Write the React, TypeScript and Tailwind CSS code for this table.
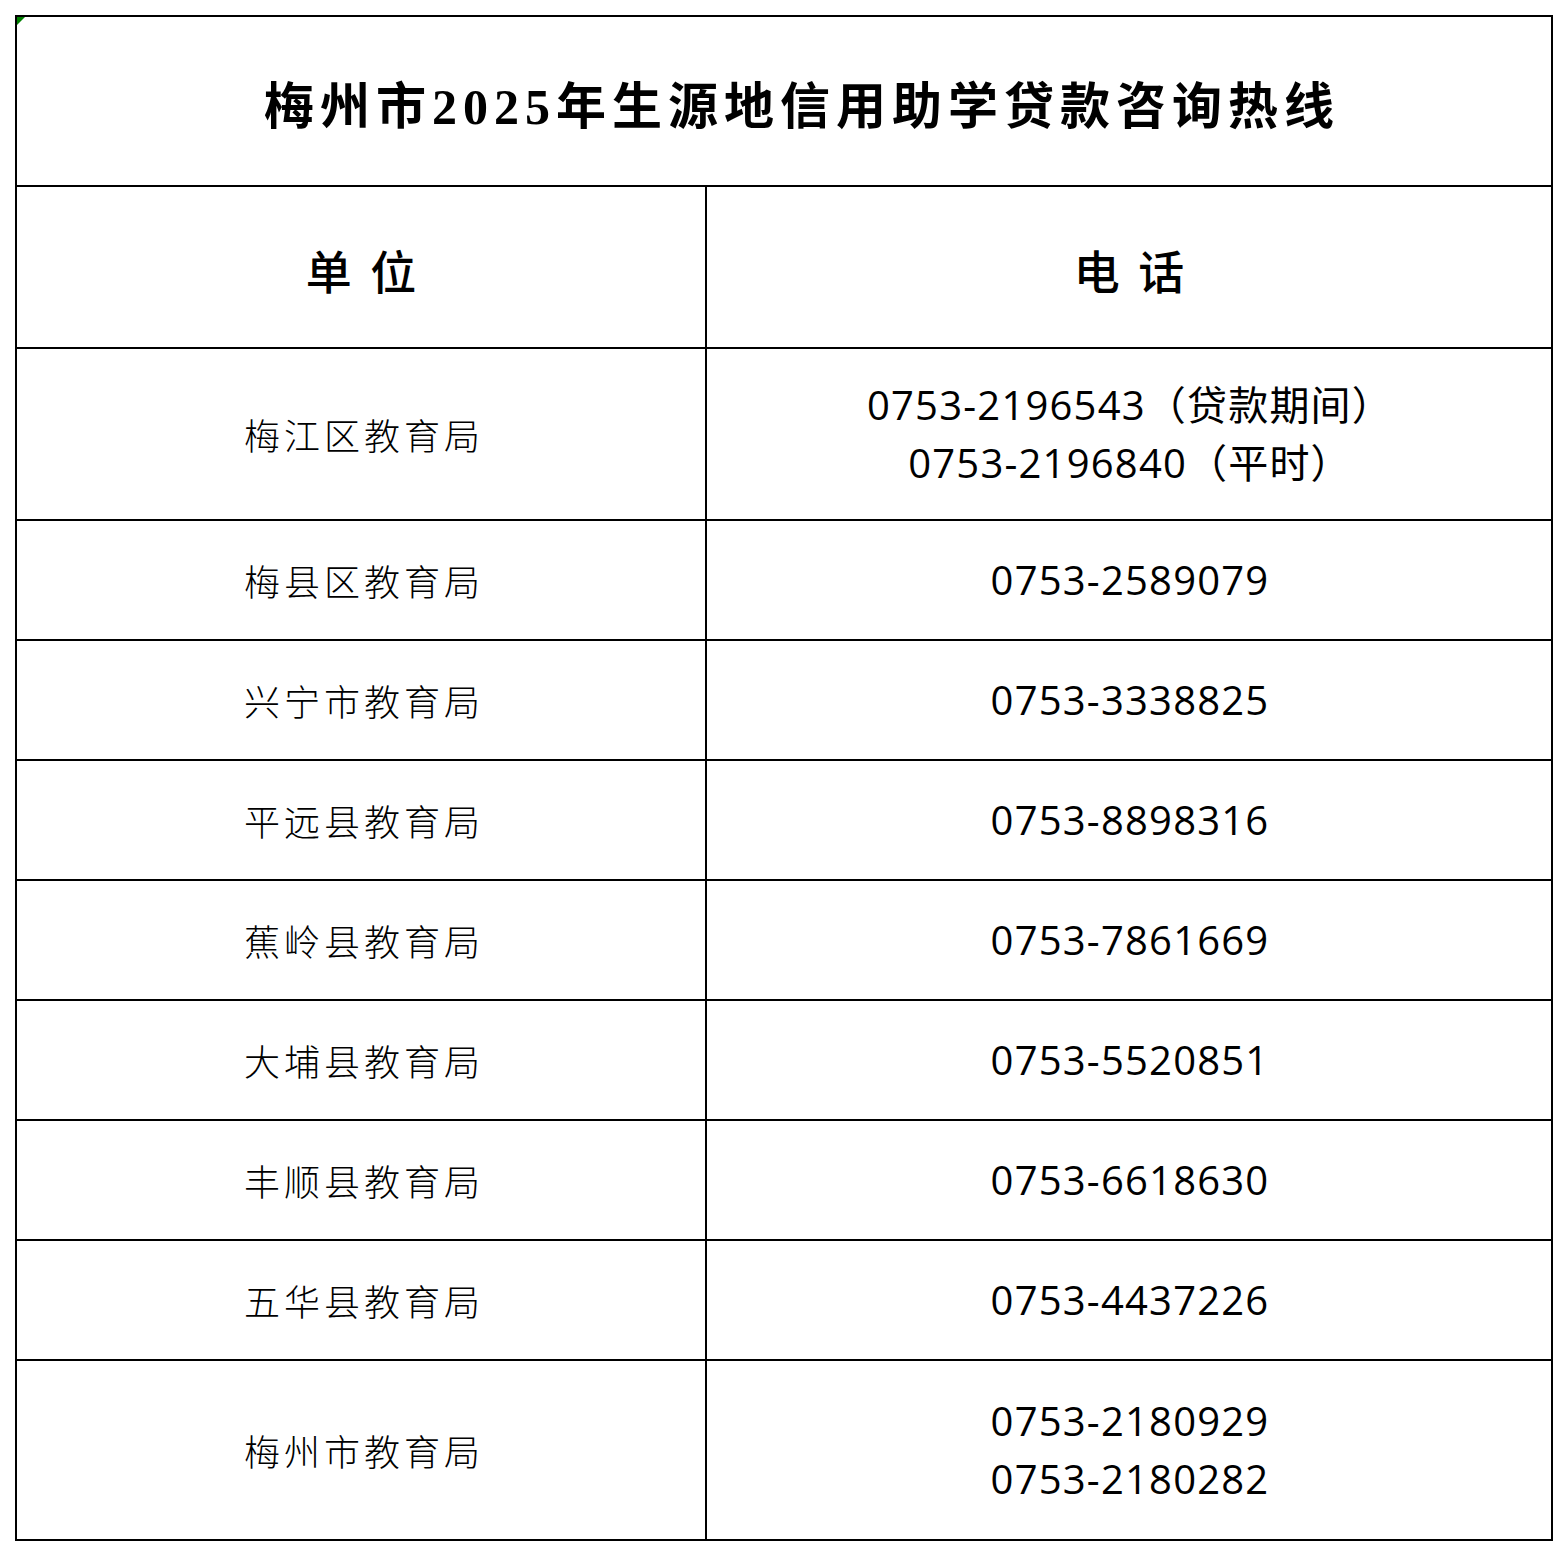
import React from 'react';

const rows: { name: string; phones: string[] }[] = [
  { name: '梅江区教育局', phones: ['0753-2196543（贷款期间）', '0753-2196840（平时）'] },
  { name: '梅县区教育局', phones: ['0753-2589079'] },
  { name: '兴宁市教育局', phones: ['0753-3338825'] },
  { name: '平远县教育局', phones: ['0753-8898316'] },
  { name: '蕉岭县教育局', phones: ['0753-7861669'] },
  { name: '大埔县教育局', phones: ['0753-5520851'] },
  { name: '丰顺县教育局', phones: ['0753-6618630'] },
  { name: '五华县教育局', phones: ['0753-4437226'] },
  { name: '梅州市教育局', phones: ['0753-2180929', '0753-2180282'] },
];

const heights = ['h-[172px]', 'h-[120px]', 'h-[120px]', 'h-[120px]', 'h-[120px]', 'h-[120px]', 'h-[120px]', 'h-[120px]', 'h-[178px]'];

export default function App() {
  return (
    <div className="min-h-[1556px] w-[1568px] bg-white pl-[15px] pt-[15px] text-black">
      <div className="relative w-[1538px] border-2 border-black">
        {/* little green marker in the corner */}
        <div className="absolute left-0 top-0 h-0 w-0 border-r-[8px] border-t-[8px] border-r-transparent border-t-[#008000]" />

        {/* Title */}
        <div className="flex h-[170px] items-center justify-center border-b-2 border-black pl-[36px] pt-[12px]">
          <h1
            className="text-[50px] font-semibold tracking-[6px]"
            style={{ fontFamily: '"Liberation Serif", "Noto Sans CJK SC", serif' }}
          >
            梅州市2025年生源地信用助学贷款咨询热线
          </h1>
        </div>

        {/* Header */}
        <div
          className="flex h-[162px] border-b-2 border-black text-[46px] font-medium"
          style={{ fontFamily: '"Noto Sans CJK SC", sans-serif' }}
        >
          <div className="flex w-[690px] items-center justify-center border-r-2 border-black pl-[4px] pt-[4px] tracking-[4px]">
            单 位
          </div>
          <div className="flex flex-1 items-center justify-center pl-[4px] pt-[4px] tracking-[4px]">电 话</div>
        </div>

        {rows.map((r, i) => (
          <div
            key={r.name}
            className={`flex ${heights[i]} ${i < rows.length - 1 ? 'border-b-2 border-black' : ''}`}
          >
            <div
              className="flex w-[690px] items-center justify-center border-r-2 border-black pl-[6px] text-[36px] font-light tracking-[4px]"
              style={{ fontFamily: '"Noto Sans CJK SC", sans-serif' }}
            >
              {r.name}
            </div>
            <div
              className="flex flex-1 flex-col items-center justify-center pl-[2px] text-[40px] leading-[58px] tracking-[1.2px]"
              style={{ fontFamily: '"Open Sans", "Noto Sans CJK SC", sans-serif' }}
            >
              {r.phones.map((p) => (
                <div key={p}>{p}</div>
              ))}
            </div>
          </div>
        ))}
      </div>
    </div>
  );
}
